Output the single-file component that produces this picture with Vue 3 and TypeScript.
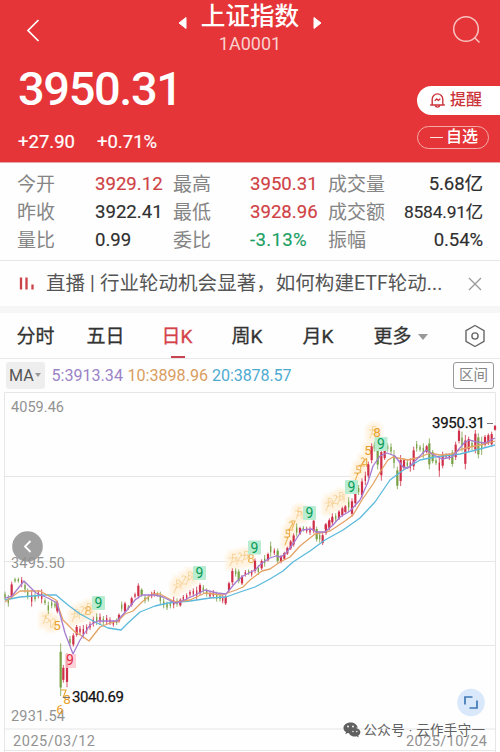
<script setup lang="ts">
type Tone = 'up' | 'down' | 'flat'
interface Quote { label: string; value: string; tone: Tone }

const quotes: Quote[] = [
  { label: '今开', value: '3929.12', tone: 'up' },
  { label: '最高', value: '3950.31', tone: 'up' },
  { label: '成交量', value: '5.68亿', tone: 'flat' },
  { label: '昨收', value: '3922.41', tone: 'flat' },
  { label: '最低', value: '3928.96', tone: 'up' },
  { label: '成交额', value: '8584.91亿', tone: 'flat' },
  { label: '量比', value: '0.99', tone: 'flat' },
  { label: '委比', value: '-3.13%', tone: 'down' },
  { label: '振幅', value: '0.54%', tone: 'flat' },
]

const tabs = ['分时', '五日', '日K', '周K', '月K']

// Each bar: x, high, low, r/g; a capital letter marks a full-width body.
const segments = [
  { x: 0, y: 530, bars: '15 185 210 g,25 195 230 g,35 155 207 R,45 143 158 g,55 143 158 g,65 141 172 r,75 155 188 g,83 175 208 g,95 180 230 r,105 190 215 g,115 180 205 r,125 178 220 r,135 205 225 g,145 215 252 g,155 210 235 g,165 215 235 g,172 212 250 R,182 340 498 G,190 405 458 R,201 370 472 R,210 318 348 g,220 310 350 R,230 285 320 R,240 288 315 r,250 285 325 r,260 283 312 r,270 275 300 r,280 260 290 r,290 250 285 g,300 250 285 r,310 258 285 g,320 255 285 r,330 262 285 r,340 270 290 r,350 265 285 g,357 250 278 R' },
  { x: 120, y: 540, bars: '5 185 215 g,15 185 220 R,25 195 210 g,35 170 200 R,45 158 175 r,55 130 175 R,65 145 170 G,75 165 190 g,85 165 185 g,95 155 175 r,103 150 170 r,112 155 170 g,121 155 195 g,131 175 205 g,141 185 210 g,151 180 205 g,161 170 205 r,171 175 200 g,181 175 200 R,190 165 185 r,200 160 180 r,210 150 170 r,220 145 170 r,230 140 178 r,240 130 165 R,250 135 160 g,260 145 170 g,270 155 175 r,280 150 175 r,290 155 185 g,300 160 185 g,308 165 190 r,317 165 195 R' },
  { x: 220, y: 480, bars: '27 305 335 R,37 265 315 R,47 265 290 g,56 268 310 G,66 285 315 R,76 270 290 r,86 268 285 g,95 270 290 r,105 235 280 R,115 255 285 g,125 238 270 R,134 225 260 g,144 218 245 R,152 185 230 g,163 205 225 r,173 205 250 G,183 225 250 R,193 215 240 R,202 200 225 R,212 180 210 R,221 160 200 R,230 130 170 g,240 140 165 R,250 138 155 g,260 140 160 r,270 140 165 r,281 115 160 R,290 140 185 G,299 155 188 g,308 160 195 R,318 130 165 R,328 115 150 R,337 100 135 r' },
  { x: 320, y: 410, bars: '17 340 360 R,27 332 350 R,37 318 340 R,47 310 335 g,57 300 330 R,67 290 320 R,76 285 310 R,86 262 305 g,96 265 320 R,106 225 290 R,116 225 255 g,126 205 265 R,136 185 225 r,145 155 205 R,155 100 160 R,163 95 125 g,173 90 178 G,184 110 212 R,194 115 150 R,203 100 125 g,213 100 135 g,222 120 175 g,232 170 238 G,242 135 228 R,252 145 180 R,262 150 175 g,271 145 185 r,281 110 180 R,290 93 125 g,300 105 125 g,310 100 145 g,320 105 130 R,328 85 178 G,338 120 160 G,348 145 165 g,358 140 200 r,368 125 175 R,378 130 145 r,388 130 150 r,397 120 170 G,407 95 150 R,417 55 100 R,426 65 125 g,436 75 178 R,446 80 125 R,456 90 120 g,466 60 130 R,475 70 145 G,485 80 135 g,495 75 110 R,505 70 105 R,515 65 110 R,525 45 62 R' },
]

const candles = segments.flatMap((s) =>
  s.bars.split(',').map((b) => {
    const [x, hi, lo, kind] = b.split(' ')
    const high = s.y + +hi / 3
    const low = s.y + +lo / 3
    const h = low - high
    const wide = kind === 'R' || kind === 'G'
    const pad = wide ? 0.16 : 0.3
    return {
      x: s.x + +x / 3, high, low,
      top: high + h * pad, height: h * (1 - 2 * pad),
      color: kind.toLowerCase() === 'r' ? '#cf2f48' : '#7aa145',
      width: wide ? 2.2 : 1.3,
    }
  }),
)

const ma = [
  { color: '#5bb9db', pts: '5,600 20,597 45,595 56,595 68,605 80,614 95,622 108,628 121,630 128,623 140,612 155,606 168,603 190,601 210,598 226,597 240,592 255,587 270,579 283,571 293,562 310,551 325,540 343,530 360,518 375,502 390,480 402,471 420,460 435,457 460,454 480,449 495,445' },
  { color: '#e4a264', pts: '5,602 20,591 40,591 56,600 63,620 75,632 82,636 89,641 100,627 110,623 118,621 125,614 133,611 142,602 152,594 160,594 175,602 190,600 205,593 222,595 236,590 243,587 250,580 262,571 270,569 280,562 290,557 300,546 315,534 330,531 345,521 353,515 362,500 373,484 380,472 388,460 393,457 408,460 420,457 430,453 440,455 452,454 462,449 475,446 485,444 495,441' },
  { color: '#a77bd0', pts: '5,598 12,596 24,581 36,593 48,598 57,603 65,633 73,654 80,640 90,625 98,621 117,621 127,610 135,600 142,595 155,595 163,597 175,603 180,602 195,595 205,590 217,593 226,594 236,582 243,576 255,570 262,563 270,558 276,556 281,557 287,552 295,541 302,530 312,529 316,532 325,532 333,525 340,517 350,511 360,500 368,482 373,466 380,456 387,453 395,456 403,467 408,468 414,462 426,450 432,454 442,459 452,457 459,449 465,442 470,440 477,442 485,443 495,438' },
]

const nines = [[98.5, 603], [199.5, 573], [254.5, 547.5], [309.5, 513], [351.5, 487], [381, 444]]

interface Run { from: number[]; to: number[]; n: number; strong?: boolean }
const runs: Run[] = [
  { from: [44, 619], to: [54, 625], n: 4 },
  { from: [73, 617], to: [92, 608], n: 7 },
  { from: [175, 588], to: [193, 576], n: 7 },
  { from: [231, 561], to: [249, 557], n: 7 },
  { from: [286, 540], to: [293, 524], n: 5, strong: true },
  { from: [297, 514], to: [302, 514], n: 3 },
  { from: [327, 506], to: [344, 497], n: 7 },
  { from: [356, 476], to: [363, 464], n: 4, strong: true },
  { from: [368, 450], to: [368, 450], n: 1 },
  { from: [371, 433], to: [377, 432], n: 3 },
]
// Countdown marks too dense to read are drawn as small hooked strokes.
const hooks = ['M-2-4h4l-3 8', 'M2-4h-3.500v3.500c5-1 4 5-.5 4', 'M0-4v8M-2-3l2-1', 'M-2-3c2-3 5 0 2 3l-2 4h4']
const marks = runs.flatMap((r) =>
  Array.from({ length: r.n }, (_, i) => {
    const t = r.n > 1 ? i / (r.n - 1) : 0
    return {
      x: r.from[0] + (r.to[0] - r.from[0]) * t,
      y: r.from[1] + (r.to[1] - r.from[1]) * t + (i % 2 ? -2 : 1),
      d: hooks[i % hooks.length],
      o: r.n === 1 ? 0 : r.strong ? 0.75 : 0.32,
    }
  }),
)
const gridLines = [476.5, 561.5, 645.5, 729]
</script>

<template>
  <main class="page">
    <header class="head">
      <div class="nav">
        <svg class="back" width="16" height="26" viewBox="0 0 16 26"><path d="M13.500 3 3 13.500 13.500 24" /></svg>
        <div class="title">
          <div class="title-row">
            <svg width="9" height="14" viewBox="0 0 9 14"><path d="M8 1.500v11L1 7z" /></svg>
            <h1>上证指数</h1>
            <svg width="9" height="14" viewBox="0 0 9 14"><path d="M1 1.500v11L8 7z" /></svg>
          </div>
          <span class="code">1A0001</span>
        </div>
        <svg class="search" width="30" height="30" viewBox="0 0 30 30"><circle cx="14" cy="14" r="12.300" /><path d="m22.500 22.500 5 5" /></svg>
      </div>
      <div class="summary">
        <div class="figures">
          <div class="price">3950.31</div>
          <div class="change"><span>+27.90</span><span>+0.71%</span></div>
        </div>
        <div class="actions">
          <div class="remind">
            <svg width="17" height="17" viewBox="0 0 17 17"><path d="M3.200 12.600V7.200a5.300 5.300 0 0 1 10.600 0v5.400M1.200 13h14.600M6.200 13.200c.5 2.600 4.100 2.600 4.600 0M5.700 8.800 7.800 7l1.500 1.400 2-1.700" /></svg>
            <span>提醒</span>
          </div>
          <div class="watch"><i></i><span>自选</span></div>
        </div>
      </div>
    </header>

    <section class="quotes">
      <template v-for="(q, i) in quotes" :key="q.label">
        <span class="label">{{ q.label }}</span>
        <span class="value" :class="[q.tone, { end: i % 3 === 2, long: q.value.length > 7 }]">{{ q.value }}</span>
      </template>
    </section>

    <section class="news">
      <svg width="16" height="16" viewBox="0 0 16 16"><path d="M2 1.500v12M7.500 1.500v12M13.500 8.500v5" /></svg>
      <p>直播<b>|</b>行业轮动机会显著，如何构建ETF轮动...</p>
      <svg class="close" width="14" height="14" viewBox="0 0 14 14"><path d="m1 1 12 12M13 1 1 13" /></svg>
    </section>

    <nav class="tabs">
      <span v-for="t in tabs" :key="t" class="tab" :class="{ active: t === '日K' }">{{ t }}</span>
      <span class="tab more">更多<i class="caret"></i></span>
      <svg class="gear" width="22" height="24" viewBox="0 0 22 24"><path d="M11 1.500 20 6.700v10.600l-9 5.200-9-5.200V6.700z" /><circle cx="11" cy="12" r="3.100" /></svg>
    </nav>

    <section class="legend">
      <span class="ma">MA<i class="caret"></i></span>
      <span class="m5">5:3913.34</span>
      <span class="m10">10:3898.96</span>
      <span class="m20">20:3878.57</span>
      <span class="range">区间</span>
    </section>

    <svg class="chart" width="500" height="361" viewBox="0 391 500 361">
      <defs>
        <filter id="glow" x="-50%" y="-50%" width="200%" height="200%"><feGaussianBlur stdDeviation="1.8" /></filter>
      </defs>
      <g class="grid">
        <path d="M4.500 752V392.500H495.500V752M4.500 750.500H495.500" />
        <path v-for="y in gridLines" :key="y" :d="`M5 ${y}H495`" />
      </g>

      <g class="prev">
        <circle cx="27.500" cy="546.500" r="15.300" />
        <path d="m30.500 541-5.500 5.500 5.500 5.500" />
      </g>
      <g class="axis">
        <text x="11" y="412" textLength="53">4059.46</text>
        <text x="11" y="567.500" textLength="54">3495.50</text>
        <text x="11" y="720.500" textLength="54">2931.54</text>
        <text x="13" y="746" textLength="82">2025/03/12</text>
        <text x="406" y="746" textLength="81">2025/10/24</text>
      </g>

      <g filter="url(#glow)">
        <rect v-for="(m, i) in marks" :key="i" :x="m.x - 5" :y="m.y - 8" width="10" height="16" fill="#fff3e0" />
      </g>
      <g class="hooks">
        <path v-for="(m, i) in marks" :key="i" :d="m.d" :transform="`translate(${m.x} ${m.y})`" :opacity="m.o" />
        <path d="M61 690h5l-3 8" />
      </g>
      <g class="mark">
        <text x="57" y="630">5</text>
        <text x="67" y="704">8</text>
        <text x="60" y="714">6</text>
        <text x="88" y="615" opacity=".6">8</text>
        <text x="251" y="563" opacity=".7">8</text>
        <text x="365" y="467" opacity=".8">4</text>
        <text x="368" y="455">5</text>
        <text x="377" y="437">8</text>
      </g>

      <g v-for="(c, i) in candles" :key="i" :fill="c.color" :stroke="c.color">
        <path :d="`M${c.x} ${c.high}V${c.low}`" stroke-width=".8" />
        <rect :x="c.x - c.width / 2" :y="c.top" :width="c.width" :height="c.height" stroke="none" />
      </g>
      <polyline v-for="m in ma" :key="m.color" class="line" :points="m.pts" :stroke="m.color" />

      <g class="nine">
        <g v-for="n in nines" :key="n[0]">
          <rect :x="n[0] - 6.5" :y="n[1] - 7" width="13" height="14" rx="1" />
          <text :x="n[0]" :y="n[1] + 5">9</text>
        </g>
      </g>
      <g class="nine low">
        <rect x="65" y="654" width="11" height="14" />
        <text x="70" y="665">9</text>
      </g>

      <g class="extreme">
        <text x="432" y="428" textLength="53">3950.31</text>
        <text x="72" y="702" textLength="52">3040.69</text>
        <path d="M487 423.500h6M63 697.500h7" />
      </g>

      <g class="expand">
        <circle cx="471" cy="702.500" r="13.800" />
        <path d="M465 704.500v-7.500h7.500M477 700.500v7.500h-7.500" />
      </g>

      <g class="source">
        <path class="bubble" d="M350.500 722.500c-4 0-7 2.400-7 5.500 0 1.800 1 3.200 2.500 4.200l-.7 2.100 2.500-1.300c.9.300 1.700.4 2.700.4.300-3.500 3-5.700 7.200-5.700-.6-3.200-3.500-5.200-7.200-5.200z" />
        <path class="bubble" d="M354.700 728c-3.300 0-5.700 1.900-5.700 4.300s2.400 4.300 5.700 4.300c.7 0 1.300-.1 1.900-.3l2.100 1.100-.5-1.800c1.300-.8 2.200-2 2.200-3.300 0-2.400-2.400-4.300-5.700-4.300z" />
        <g class="eyes"><circle cx="348" cy="726.500" r=".9" /><circle cx="353" cy="726.500" r=".9" /><circle cx="353" cy="731.500" r=".7" /><circle cx="356.800" cy="731.500" r=".7" /></g>
        <text x="363.500" y="734.500" textLength="121.500">公众号 · 云作手守一</text>
      </g>
    </svg>
  </main>
</template>

<style>
body { margin: 0; background: #fff; }
</style>

<style scoped>
.page { width: 500px; height: 752px; overflow: hidden; background: #fefefe; font-family: Roboto, "Noto Sans CJK SC", sans-serif; color: #333; }
svg { display: block; flex: none; }
.head { height: 162px; background: #e53538; color: #fff; border-bottom: 1px solid #e8aaa8; display: flex; flex-direction: column; }
.nav { height: 60px; display: flex; justify-content: space-between; align-items: flex-start; padding: 0 18px 0 25px; }
.back { margin-top: 17px; fill: none; stroke: #fff; stroke-width: 1.7; }
.title { display: flex; flex-direction: column; align-items: center; margin-left: 7px; padding-top: 1px; }
.title-row { display: flex; align-items: center; gap: 14px; height: 32px; }
.title-row svg { fill: #fff; stroke: #fff; stroke-width: 1; stroke-linejoin: round; margin-top: 12px; }
h1 { margin: 0; font-size: 24.6px; line-height: 32px; font-weight: 500; }
.code { font-size: 18px; line-height: 22px; letter-spacing: 0; color: #f9d0ce; }
.search { margin-top: 15px; fill: none; stroke: #f7c4c2; stroke-width: 1.5; }
.summary { flex: 1; display: flex; justify-content: space-between; }
.figures { padding-left: 18px; }
.price { font-size: 47px; line-height: 58px; height: 72px; font-weight: 500; letter-spacing: -1.4px; }
.change { display: flex; gap: 22px; font-size: 18.5px; line-height: 20px; letter-spacing: 0; -webkit-text-stroke: .2px #fff; }
.actions { width: 83px; padding-top: 26px; display: flex; flex-direction: column; gap: 11px; }
.remind { height: 29px; display: flex; align-items: center; gap: 4px; padding-left: 12px; border-radius: 15px 0 0 15px; background: #fff; color: #cb343a; font-size: 16px; line-height: 24px; font-weight: 500; }
.remind svg { fill: none; stroke: #cb343a; stroke-width: 1.4; }
.remind span { position: relative; top: -1px; }
.watch { box-sizing: border-box; width: 72px; height: 23px; border: 1px solid #f6aaa8; border-radius: 12px; display: flex; align-items: center; gap: 3px; padding-left: 12px; font-size: 16px; line-height: 20px; font-weight: 500; }
.watch span { position: relative; top: -1px; }
.watch i { width: 13px; height: 1.5px; background: #ffe5e4; }
.quotes { height: 98px; box-sizing: border-box; padding: 8px 17px 6px; display: grid; grid-template-columns: 78px 78px 77px 78px 60px 95px; grid-auto-rows: 27.7px; align-items: center; border-bottom: 1px solid #e7e7e7; white-space: nowrap; }
.label { font-size: 19px; line-height: 27px; color: #858585; }
.value { font-size: 18.6px; line-height: 27px; letter-spacing: 0; color: #2f2f2f; -webkit-text-stroke: .15px currentColor; }
.value.up { color: #cf4145; }
.value.down { color: #1ba064; letter-spacing: .3px; }
.value.end { text-align: right; letter-spacing: -.1px; }
.value.long { font-size: 17.4px; letter-spacing: -.2px; }
.news { height: 45px; display: flex; align-items: center; padding: 0 18px 0 19px; border-bottom: 7px solid #f6f6f6; }
.news svg { fill: none; stroke: #cb4248; stroke-width: 2.3; }
.news p { margin: 0 0 0 11px; flex: 1; white-space: nowrap; font-size: 19.5px; line-height: 28px; letter-spacing: .04px; color: #555; }
.news b { font-weight: 400; margin: 0 5px; }
.news .close { stroke: #999; stroke-width: 1.3; }
.tabs { height: 45px; display: grid; grid-template-columns: 70px 75px 70px 71px 71px 90px 22px; align-items: center; padding-left: 16.5px; border-bottom: 1px solid #e8e8e8; font-size: 19px; color: #333; -webkit-text-stroke: .3px currentColor; }
.tab { position: relative; line-height: 43px; padding-top: 2px; }
.active { color: #d4434a; }
.active::after { content: ""; position: absolute; left: 9px; bottom: 0; width: 14px; height: 2px; background: #c64550; }
.more { display: flex; align-items: center; }
.caret { width: 0; height: 0; border: 5px solid transparent; border-top: 6px solid #999; border-bottom: 0; margin-left: 6px; }
.gear { fill: none; stroke: #666; stroke-width: 1.4; stroke-linejoin: round; }
.legend { height: 32px; display: flex; align-items: center; padding: 0 6px; font-size: 16.1px; white-space: nowrap; }
.ma { width: 39px; height: 27px; box-sizing: border-box; display: flex; align-items: center; padding-left: 3px; background: #eee; border-radius: 3px; color: #555; }
.ma .caret { border-width: 4px 3.5px 0; margin-left: 1px; }
.m5 { margin-left: 6.5px; color: #9a83c7; width: 76px; }
.m10 { color: #d99d61; width: 84.5px; }
.m20 { color: #4eabd0; letter-spacing: -.1px; }
.range { margin-left: auto; box-sizing: border-box; width: 41px; height: 27px; border: 1px solid #999; border-radius: 3px; text-align: center; line-height: 25px; font-size: 14.5px; color: #858585; }
.grid path { fill: none; stroke: #e6e6e6; stroke-width: 1; }
.axis { font-size: 14.5px; fill: #929292; }
.mark { font-size: 13.5px; text-anchor: middle; fill: #e8a12d; }
.hooks { fill: none; stroke: #e8a12d; stroke-width: 1.1; }
.line { fill: none; stroke-width: 1.3; stroke-linejoin: round; }
.nine { font-size: 14px; text-anchor: middle; fill: #079b58; }
.nine rect { fill: #b9ecd1; }
.low { fill: #df2947; }
.low rect { fill: #ffc5cc; fill-opacity: .8; }
.extreme { font-size: 15px; fill: #111; }
.extreme text { stroke: #111; stroke-width: .25px; }
.extreme path { stroke: #777; }
.prev circle { fill: #a0a0a0; }
.prev path { fill: none; stroke: #fff; stroke-width: 1.8; }
.expand circle { fill: #dae8fb; }
.expand path { fill: none; stroke: #4078b6; stroke-width: 1.7; }
.source { font-size: 13.5px; fill: #606060; }
.eyes { fill: #fff; }
</style>
